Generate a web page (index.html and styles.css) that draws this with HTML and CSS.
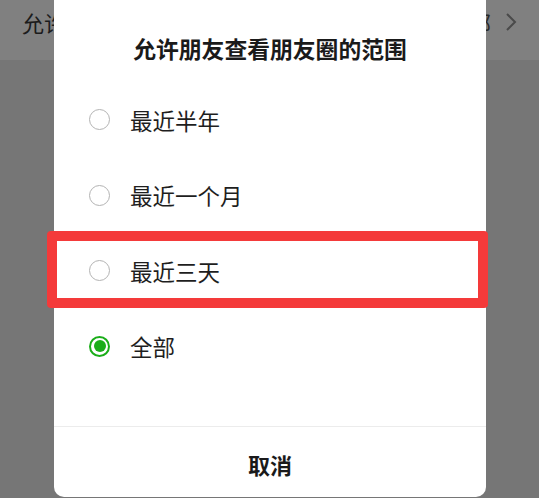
FILE: index.html
```html
<!DOCTYPE html>
<html lang="zh-CN">
<head>
<meta charset="utf-8">
<link rel="stylesheet" href="styles.css">
</head>
<body>
<div class="page">
  <div class="setting-row">
    <span class="setting-label">允许朋友查看朋友圈的范围</span>
    <span class="setting-value"><span class="value-text">全部</span>
      <svg class="chevron" width="12" height="20" viewBox="0 0 12 20"><polyline points="2,2 10,10 2,18" fill="none" stroke="#4a4a4a" stroke-width="2"/></svg>
    </span>
  </div>

  <div class="dialog">
    <div class="dialog-title">允许朋友查看朋友圈的范围</div>
    <div class="options">
      <div class="option"><span class="radio"></span><span class="option-text">最近半年</span></div>
      <div class="option"><span class="radio"></span><span class="option-text">最近一个月</span></div>
      <div class="option highlighted"><span class="radio"></span><span class="option-text">最近三天</span><span class="mark"></span></div>
      <div class="option"><span class="radio checked"></span><span class="option-text">全部</span></div>
    </div>
    <div class="dialog-footer">取消</div>
  </div>
</div>
</body>
</html>
```

FILE: styles.css
```css
html, body {
  margin: 0;
  padding: 0;
}
body {
  width: 539px;
  height: 498px;
  overflow: hidden;
  background: #767676;
  font-family: "Noto Sans CJK SC", "Noto Sans", sans-serif;
  color: #1a1a1a;
}
.page {
  position: relative;
  width: 539px;
  height: 498px;
}
.setting-row {
  height: 60px;
  background: #808080;
  display: flex;
  align-items: center;
  justify-content: space-between;
  padding: 0 22px 0 22px;
  box-sizing: border-box;
  font-size: 22px;
  color: #1c1c1c;
}
.setting-label {
  margin-top: -16px;
  white-space: nowrap;
}
.setting-value {
  display: flex;
  align-items: center;
  gap: 14px;
  margin-top: -16px;
  color: #2a2a2a;
  white-space: nowrap;
}
.chevron {
  display: block;
}
.dialog {
  position: absolute;
  left: 54px;
  top: -10px;
  width: 432px;
  height: 507px;
  background: #fff;
  border-radius: 10px;
  display: flex;
  flex-direction: column;
}
.dialog-title {
  height: 92px;
  display: flex;
  align-items: center;
  justify-content: center;
  padding-top: 24px;
  box-sizing: border-box;
  font-size: 22.8px;
  font-weight: 700;
  color: #1a1a1a;
}
.options {
  display: flex;
  flex-direction: column;
}
.option {
  position: relative;
  height: 75.5px;
  display: flex;
  align-items: center;
  padding-left: 35px;
  gap: 20px;
  font-size: 22.5px;
  color: #1e1e1e;
}
.radio {
  width: 21px;
  height: 21px;
  box-sizing: border-box;
  border: 1.6px solid #b3b3b3;
  border-radius: 50%;
  flex: none;
  position: relative;
}
.radio.checked {
  border: 2.2px solid #1aad19;
}
.radio.checked::after {
  content: "";
  position: absolute;
  left: 50%;
  top: 50%;
  width: 12px;
  height: 12px;
  margin: -6px 0 0 -6px;
  border-radius: 50%;
  background: #1aad19;
}
.mark {
  position: absolute;
  left: -7px;
  top: -2px;
  width: 441px;
  height: 77px;
  box-sizing: border-box;
  border: 10px solid #f43a3a;
  border-radius: 4px;
}
.dialog-footer {
  margin-top: 42px;
  border-top: 1px solid #ececec;
  flex: 1;
  display: flex;
  align-items: center;
  justify-content: center;
  padding-top: 4px;
  font-size: 22px;
  font-weight: 700;
  color: #1a1a1a;
}
```
